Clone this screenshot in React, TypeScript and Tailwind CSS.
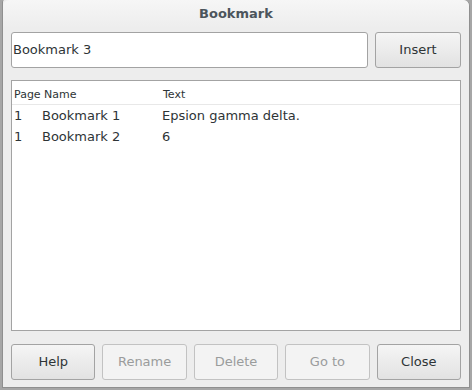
export default function App() {
  const rows = [
    { page: '1', name: 'Bookmark 1', text: 'Epsion gamma delta.' },
    { page: '1', name: 'Bookmark 2', text: '6' },
  ];
  const buttons = [
    { label: 'Help', enabled: true },
    { label: 'Rename', enabled: false },
    { label: 'Delete', enabled: false },
    { label: 'Go to', enabled: false },
    { label: 'Close', enabled: true },
  ];

  return (
    <div
      className="w-[472px] h-[390px] bg-[#a6a6a6] flex px-[2px] pb-[2px] overflow-hidden"
      style={{ fontFamily: '"DejaVu Sans", "Noto Sans", sans-serif' }}
    >
      <div className="flex-1 flex flex-col bg-[#ededed] border border-t-0 border-[#8f8f8f] rounded-tr-[6px] rounded-tl-[2px]">
        <div className="h-[28px] flex items-center justify-center text-[13px] font-bold text-[#4c555c] bg-gradient-to-b from-[#f6f6f6] to-[#ededed] rounded-t-[6px]">
          Bookmark
        </div>

        <div className="flex gap-[7px] px-[8px] pt-[4px]">
          <div className="flex-1 h-[36px] bg-white border border-[#a3a3a3] rounded-[3px] flex items-center px-[1px] text-[13px] text-[#2e3436]">
            Bookmark 3
          </div>
          <button className="w-[86px] h-[36px] border border-[#a3a3a3] rounded-[3px] bg-gradient-to-b from-[#f5f5f5] to-[#e2e2e2] text-[13px] text-[#2e3436]">
            Insert
          </button>
        </div>

        <div className="mx-[8px] mt-[12px] h-[251px] bg-white border border-[#a3a3a3] flex flex-col">
          <div className="h-[24px] flex items-start pt-[7px] text-[11px] leading-[13px] text-[#2e3436] border-b border-[#e8e8e8]">
            <span className="w-[32px] pl-[2px]">Page</span>
            <span className="w-[119px]">Name</span>
            <span>Text</span>
          </div>
          {rows.map((r) => (
            <div key={r.name} className="h-[21px] flex items-center text-[13px] text-[#2e3436]">
              <span className="w-[30px] pl-[2px]">{r.page}</span>
              <span className="w-[120px]">{r.name}</span>
              <span>{r.text}</span>
            </div>
          ))}
        </div>

        <div className="flex gap-[7px] px-[8px] mt-[13px]">
          {buttons.map((b) =>
            b.enabled ? (
              <button
                key={b.label}
                className="flex-1 h-[36px] border border-[#a3a3a3] rounded-[3px] bg-gradient-to-b from-[#f5f5f5] to-[#e2e2e2] text-[13px] text-[#2e3436]"
              >
                {b.label}
              </button>
            ) : (
              <button
                key={b.label}
                className="flex-1 h-[36px] border border-[#c2c2c2] rounded-[3px] bg-[#f3f3f3] text-[13px] text-[#9a9c9c]"
              >
                {b.label}
              </button>
            )
          )}
        </div>
      </div>
    </div>
  );
}
